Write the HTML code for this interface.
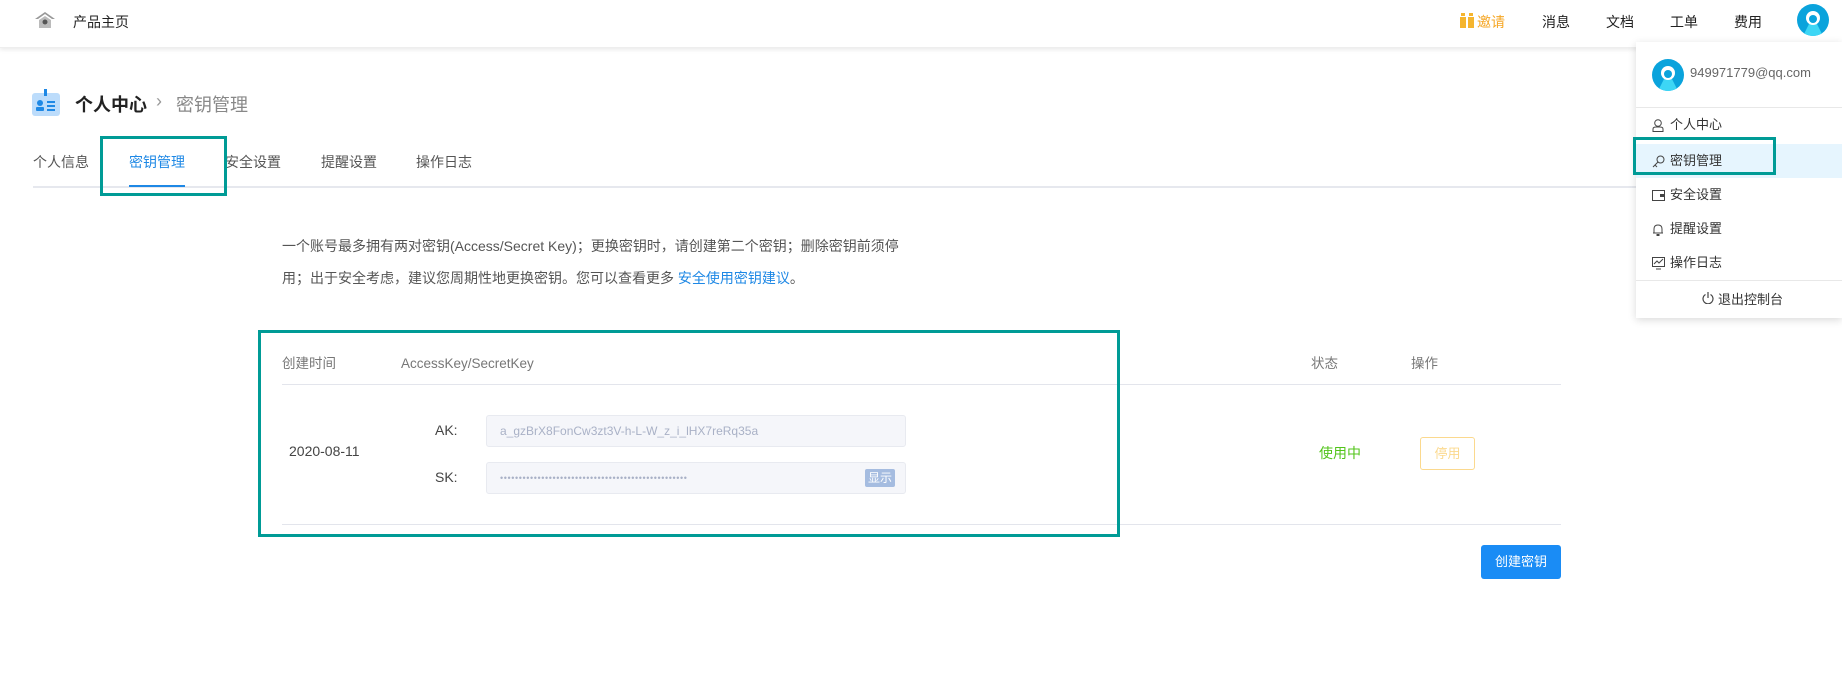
<!DOCTYPE html>
<html><head><meta charset="utf-8"><style>
*{margin:0;padding:0;box-sizing:border-box}
body{width:1842px;height:676px;background:#fff;font-family:"Liberation Sans","Noto Sans CJK SC",sans-serif;position:relative;overflow:hidden;color:#333}
.a{position:absolute;white-space:nowrap}
.hdr{position:absolute;left:0;top:0;width:1842px;height:48px;background:#fff;box-shadow:0 2px 4px rgba(0,0,0,.08);border-bottom:1px solid #eee}
.nav{font-size:14px;color:#222;top:12px}
.tab{font-size:14px;color:#555;top:152px}
.teal{position:absolute;border:3px solid #009b96}
.dd{position:absolute;left:1636px;top:42px;width:206px;height:276px;background:#fff;box-shadow:0 2px 8px rgba(0,0,0,.15)}
.it{position:absolute;left:0;width:206px;height:34px;font-size:13px;color:#333;line-height:34px;padding-left:34px}
.ic{position:absolute;left:16px;top:11px}
.inp{position:absolute;left:486px;width:420px;height:32px;background:#f5f6fa;border:1px solid #e8eaf0;border-radius:3px;font-size:12px;color:#a9b1c6;line-height:30px;padding-left:13px}
.th{top:356px;font-size:13.5px;color:#777;line-height:16px}
</style></head><body>
<div class="hdr"></div>
<svg class="a" style="left:34px;top:11px" width="22" height="18" viewBox="0 0 22 18"><path d="M11 1 L1 8 H4 L11 3 L18 8 H21 Z" fill="#999"/><path d="M5 9 L11 5 L17 9 V17 H5 Z" fill="#bbb"/><circle cx="11" cy="11" r="2.5" fill="#555"/></svg>
<div class="a nav" style="left:73px">产品主页</div>
<svg class="a" style="left:1460px;top:13px" width="14" height="15"><rect x="0" y="4" width="6" height="11" fill="#f5b52e"/><rect x="8" y="4" width="6" height="11" fill="#f5b52e"/><rect x="1" y="0" width="4" height="3" fill="#f5b52e"/><rect x="9" y="0" width="4" height="3" fill="#f5b52e"/></svg>
<div class="a nav" style="left:1477px;color:#f5a623">邀请</div>
<div class="a nav" style="left:1542px">消息</div>
<div class="a nav" style="left:1606px">文档</div>
<div class="a nav" style="left:1670px">工单</div>
<div class="a nav" style="left:1734px">费用</div>
<svg class="a" style="left:1797px;top:4px" width="32" height="32" viewBox="0 0 32 32"><defs><clipPath id="c1"><circle cx="16" cy="16" r="16"/></clipPath></defs><circle cx="16" cy="16" r="16" fill="#0aa3dc"/><g clip-path="url(#c1)"><path d="M6 32 L12 20 H20 L26 32 Z" fill="#3dd6f5"/><circle cx="16" cy="14" r="7" fill="#fff"/><circle cx="16" cy="15" r="4" fill="#0aa3dc"/></g></svg>

<svg class="a" style="left:32px;top:89px" width="28" height="27"><rect x="0" y="4" width="28" height="23" rx="3" fill="#bcdcfb"/><rect x="12" y="0" width="3" height="7" fill="#1e88e5"/><circle cx="8" cy="14" r="3" fill="#1e88e5"/><rect x="4" y="18" width="8" height="4" rx="1" fill="#1e88e5"/><rect x="15" y="12" width="8" height="2" fill="#1e88e5"/><rect x="15" y="16" width="8" height="2" fill="#1e88e5"/><rect x="15" y="20" width="8" height="2" fill="#1e88e5"/></svg>
<div class="a" style="left:75px;top:91px;font-size:18px;font-weight:bold;color:#222">个人中心</div>
<div class="a" style="left:156px;top:91px;font-size:18px;color:#999">›</div>
<div class="a" style="left:176px;top:91px;font-size:18px;color:#888">密钥管理</div>

<div class="a tab" style="left:33px">个人信息</div>
<div class="a tab" style="left:129px;color:#1e88e5">密钥管理</div>
<div class="a tab" style="left:225px">安全设置</div>
<div class="a tab" style="left:321px">提醒设置</div>
<div class="a tab" style="left:416px">操作日志</div>
<div class="a" style="left:33px;top:186px;width:1610px;height:2px;background:#e6e8ee"></div>
<div class="a" style="left:129px;top:185px;width:56px;height:2px;background:#1e88e5"></div>
<div class="teal" style="left:100px;top:136px;width:127px;height:60px"></div>

<div class="a" style="left:282px;top:230px;font-size:14px;color:#555;line-height:32px">一个账号最多拥有两对密钥(Access/Secret Key)；更换密钥时，请创建第二个密钥；删除密钥前须停<br>用；出于安全考虑，建议您周期性地更换密钥。您可以查看更多 <span style="color:#1e88e5">安全使用密钥建议</span>。</div>

<div class="a th" style="left:282px">创建时间</div>
<div class="a th" style="left:401px">AccessKey/SecretKey</div>
<div class="a th" style="left:1311px">状态</div>
<div class="a th" style="left:1411px">操作</div>
<div class="a" style="left:282px;top:384px;width:1279px;height:1px;background:#e3e5ec"></div>
<div class="a" style="left:289px;top:443px;font-size:14px;color:#444">2020-08-11</div>
<div class="a" style="left:435px;top:422px;font-size:14px;color:#444">AK:</div>
<div class="a" style="left:435px;top:469px;font-size:14px;color:#444">SK:</div>
<div class="inp" style="top:415px">a_gzBrX8FonCw3zt3V-h-L-W_z_i_lHX7reRq35a</div>
<div class="inp" style="top:462px;font-size:9px;letter-spacing:0.6px">••••••••••••••••••••••••••••••••••••••••••••••••••</div>
<div class="a" style="left:865px;top:469px;width:30px;height:18px;background:#a5bce0;border-radius:2px;color:#fff;font-size:12px;line-height:18px;text-align:center">显示</div>
<div class="a" style="left:1319px;top:443px;font-size:14px;color:#52c41a">使用中</div>
<div class="a" style="left:1420px;top:437px;width:55px;height:33px;border:1px solid #fbd98e;border-radius:3px;color:#fbd98e;font-size:13px;line-height:31px;text-align:center">停用</div>
<div class="a" style="left:282px;top:524px;width:1279px;height:1px;background:#e3e5ec"></div>
<div class="teal" style="left:258px;top:330px;width:862px;height:207px"></div>
<div class="a" style="left:1481px;top:545px;width:80px;height:34px;background:#1a8cf5;border-radius:3px;color:#fff;font-size:13px;line-height:34px;text-align:center">创建密钥</div>

<div class="dd">
<svg class="a" style="left:16px;top:17px" width="32" height="32" viewBox="0 0 32 32"><defs><clipPath id="c2"><circle cx="16" cy="16" r="16"/></clipPath></defs><circle cx="16" cy="16" r="16" fill="#0aa3dc"/><g clip-path="url(#c2)"><path d="M6 32 L12 20 H20 L26 32 Z" fill="#3dd6f5"/><circle cx="16" cy="14" r="7" fill="#fff"/><circle cx="16" cy="15" r="4" fill="#0aa3dc"/></g></svg>
<div class="a" style="left:54px;top:23px;font-size:13px;color:#666">949971779@qq.com</div>
<div class="a" style="left:0;top:65px;width:206px;height:1px;background:#e8e8e8"></div>
<div class="it" style="top:66px"><svg class="ic" width="12" height="13"><circle cx="6" cy="4" r="3.3" fill="none" stroke="#444"/><path d="M1 12.5 V10 Q1 8 4 8 H8 Q11 8 11 10 V12.5 Z" fill="none" stroke="#444"/></svg>个人中心</div>
<div class="it" style="top:102px;background:#e6f5fe"><svg class="ic" width="13" height="13"><circle cx="8.5" cy="4.5" r="3.5" fill="none" stroke="#444"/><path d="M6 7 L1 12 M3 10 L5 12" stroke="#444" fill="none"/></svg>密钥管理</div>
<div class="it" style="top:136px"><svg class="ic" width="13" height="12"><rect x="0.5" y="1.5" width="12" height="10" fill="none" stroke="#444"/><rect x="8" y="5" width="4" height="3" fill="#444"/></svg>安全设置</div>
<div class="it" style="top:170px"><svg class="ic" width="12" height="13"><path d="M2 10 V6 Q2 2 6 2 Q10 2 10 6 V10 H1 H11" fill="none" stroke="#444"/><rect x="4.5" y="11" width="3" height="2" fill="#444"/></svg>提醒设置</div>
<div class="it" style="top:204px"><svg class="ic" width="13" height="13"><rect x="0.5" y="0.5" width="12" height="9" fill="none" stroke="#444"/><path d="M2 7 L5 4 L7 6 L11 2 M4 12 H9" fill="none" stroke="#444"/></svg>操作日志</div>
<div class="a" style="left:0;top:238px;width:206px;height:1px;background:#e8e8e8"></div>
<svg class="a" style="left:66px;top:250px" width="12" height="12"><path d="M3.5 2.5 A5 5 0 1 0 8.5 2.5" fill="none" stroke="#444" stroke-width="1.2"/><path d="M6 0 V6" stroke="#444" stroke-width="1.2"/></svg>
<div class="a" style="left:82px;top:247px;font-size:13px;color:#333">退出控制台</div>
</div>
<div class="teal" style="left:1633px;top:137px;width:143px;height:38px"></div>
</body></html>
